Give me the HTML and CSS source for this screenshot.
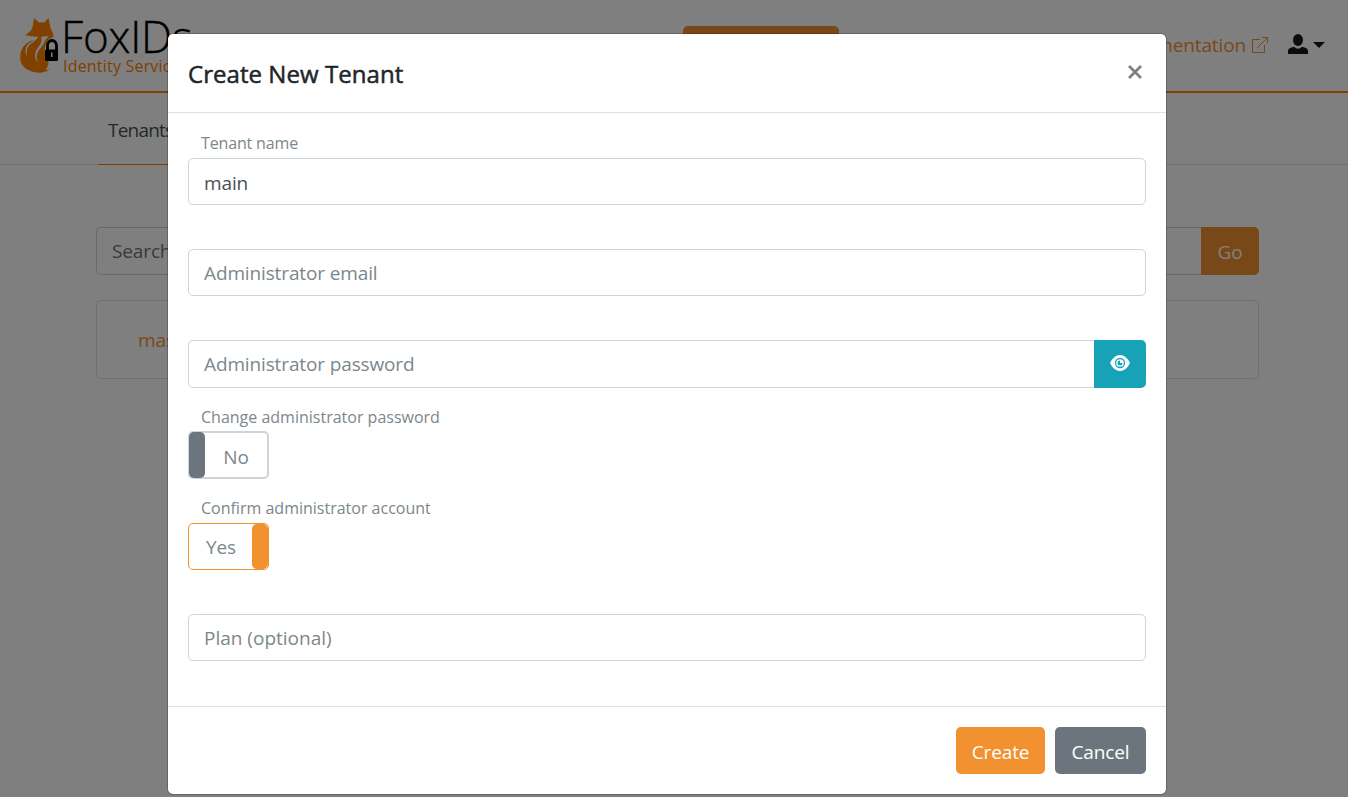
FILE: index.html
```html
<!DOCTYPE html>
<html lang="en">
<head>
<meta charset="utf-8">
<title>FoxIDs</title>
<link rel="stylesheet" href="styles.css">
</head>
<body>
<div class="page">
  <header class="navbar">
    <a class="brand">
      <svg class="fox" width="40" height="58" viewBox="0 0 40 58">
        <path fill="#ff8000" d="M14 2l5 4.500h5L28.500 2l2 10c2 4 3 6 3 9-4 1-6 3-8 8-2 6 0 10 2 13 2 4 1 8-2 12l4-.500c-5 4-14 4-20 1C0 51-1 42 1 35.500 3 29 8 26 14 23.500l3-2L5 19c5-3 6-4 7.500-8z"/>
        <path fill="#fff" d="M5 19.500q8 1.500 13 1c-1 4-7 6-10 10.500-2 3-1 6-1.500 9-2.500-6-.500-10 3-13 3-2 4-3 4-5z"/>
        <path fill="#fff" d="M21 21q4-1 8-.500c-5 3-4 7-8 11-4 5-6 9-2.500 15.500-5-4-4-11-.500-15.500 3-4 4.500-7 3-10.500z"/>
        <path fill="none" stroke="#000" stroke-width="2.800" d="M27.500 35v-5.500a4.500 5 0 0 1 9 0V35"/>
        <rect x="25" y="33.500" width="13" height="11.500" rx="1.500"/>
        <path fill="#fff" d="M31 36.500h1.500V41H31z"/>
      </svg>
      <span class="brand-text"><span class="brand-name">FoxIDs</span><span class="brand-sub">Identity Services</span></span>
    </a>
    <button class="btn new-tenant">New Tenant</button>
    <nav class="nav-right">
      <a class="docs"><span>Documentation</span>
        <svg width="16" height="16" viewBox="0 0 16 16" fill="none" stroke="#f29130" stroke-width="1"><path d="M8 2.500H.500v13h12V8M5 11L15.500.500M10 .500h5.500V6"/></svg>
      </a>
      <a class="user">
        <svg width="20" height="20" viewBox="0 0 20 20" fill="#16181b"><ellipse cx="10" cy="6" rx="5" ry="6"/><path d="M0 20v-3q0-2.500 3.500-3.500l2.500-.8q4 4 8 0l2.500.8Q20 14.500 20 17v3z"/></svg>
        <span class="caret"></span>
      </a>
    </nav>
  </header>
  <div class="tabs"><a class="tab">Tenants</a></div>
  <main class="content">
    <div class="search"><div class="search-input">Search</div><button class="btn go">Go</button></div>
    <div class="card"><a>master</a></div>
  </main>
</div>
<div class="backdrop">
  <div class="modal">
    <div class="modal-header"><h5 class="title">Create New Tenant</h5>
      <svg class="close" width="14" height="14" viewBox="0 0 14 14" stroke="#7f7f7f" stroke-width="2.700"><path d="M1 1l12 12M13 1L1 13"/></svg>
    </div>
    <div class="modal-body">
      <label class="label name-label">Tenant name</label>
      <div class="input filled">main</div>
      <div class="input email">Administrator email</div>
      <div class="group"><div class="input password">Administrator password</div>
        <button class="eye"><svg width="20" height="16" viewBox="0 0 20 16"><path fill="#fff" d="M0 8Q4 0 10 0t10 8q-4 8-10 8T0 8z"/><circle cx="10" cy="8" r="4.500" fill="none" stroke="#17a2b8" stroke-width="1.300"/><path fill="#17a2b8" d="M10 5.500V8h2.500A2.500 2.500 0 1 1 10 5.500z"/></svg></button>
      </div>
      <label class="label change-label">Change administrator password</label>
      <div class="toggle off"><span class="knob"></span><span class="toggle-text">No</span></div>
      <label class="label confirm-label">Confirm administrator account</label>
      <div class="toggle on"><span class="toggle-text">Yes</span><span class="knob"></span></div>
      <div class="input plan">Plan (optional)</div>
    </div>
    <div class="modal-footer"><button class="btn create">Create</button><button class="btn cancel">Cancel</button></div>
  </div>
</div>
</body>
</html>
```
FILE: styles.css
```css
* { box-sizing: border-box; }
body { margin: 0; height: 797px; overflow: hidden; background: #fff; color: #212529; font: 19px/30px "Open Sans", "Noto Sans", sans-serif; letter-spacing: -0.13px; }
.page { height: 797px; }
.navbar { display: flex; height: 93px; padding: 16px 23px 0 20px; border-bottom: 2px solid #ff8000; position: relative; }
.brand { display: flex; }
.fox { flex: none; }
.brand-text { display: flex; flex-direction: column; margin-left: 1px; white-space: nowrap; }
.brand-name { font-size: 44px; line-height: 42px; color: #000; font-weight: 300; letter-spacing: -0.2px; margin-top: -1px; -webkit-text-stroke: 0.4px #000; }
.brand-sub { font-size: 16px; line-height: 18px; color: #ff8000; margin-left: 2px; letter-spacing: 0.2px; }
.btn { border: 0; border-radius: 5px; color: #fff; font: inherit; letter-spacing: inherit; background: #f29130; padding: 0; }
.new-tenant { position: absolute; left: 683px; top: 26px; width: 156px; height: 47px; }
.nav-right { display: flex; margin-left: auto; gap: 20px; height: 58px; align-items: center; }
.docs { display: flex; align-items: center; gap: 6px; color: #f29130; }
.user { display: flex; align-items: center; gap: 5px; margin-top: -2px; }
.caret { border: 6px solid transparent; border-top-color: #16181b; border-bottom: 0; margin-top: 1px; }
.tabs { height: 72px; padding-left: 98px; border-bottom: 1px solid #dee2e6; display: flex; }
.tab { height: 72px; width: 90px; padding: 22px 0 0 10px; border-bottom: 1px solid #ff8000; color: #495057; letter-spacing: -0.8px; }
.content { padding: 62px 89px 0 96px; }
.search { display: flex; height: 48px; }
.search-input { flex: 1; border: 1px solid #ced4da; border-right: 0; border-radius: 5px 0 0 5px; padding: 8px 15px; color: #6c757d; }
.go { width: 58px; border-radius: 0 5px 5px 0; padding-top: 2px; }
.card { margin-top: 25px; height: 79px; border: 1px solid #dfdfdf; border-radius: 5px; padding: 24px 41px; color: #f29130; }
.backdrop { position: absolute; inset: 0; background: rgba(0,0,0,.5); padding: 33px 0 0 167px; }
.modal { width: 1000px; height: 762px; border: 1px solid rgba(0,0,0,.2); border-radius: 6px; background: #fff; background-clip: padding-box; display: flex; flex-direction: column; }
.modal-header { height: 79px; padding: 0 24px 0 20px; display: flex; justify-content: space-between; border-bottom: 1px solid #dee2e6; }
.title { margin: 25px 0 0; font-size: 24px; line-height: 30px; font-weight: 400; letter-spacing: 0.05px; -webkit-text-stroke: 0.5px #212529; }
.close { margin-top: 31px; }
.modal-body { flex: 1; padding: 18px 20px 0; }
.label { display: block; height: 27px; padding-left: 13px; font-size: 16px; line-height: 24px; color: #7c878c; letter-spacing: 0; }
.name-label { letter-spacing: -0.15px; }
.input { height: 47px; border: 1px solid #ced4da; border-radius: 5px; padding: 8px 15px 0; line-height: 30px; color: #7c878c; }
.filled { color: #495057; padding-top: 9px; }
.email { margin-top: 44px; }
.group { display: flex; margin-top: 44px; }
.password { flex: 1; height: 48px; border-right: 0; border-radius: 5px 0 0 5px; }
.eye { width: 52px; height: 48px; border: 0; padding: 0 0 2px; border-radius: 0 5px 5px 0; background: #17a2b8; display: flex; align-items: center; justify-content: center; }
.change-label { margin-top: 17px; height: 26px; }
.confirm-label { margin-top: 17px; }
.toggle { width: 81px; height: 47px; border-radius: 5px; display: flex; color: #7c878c; line-height: 30px; }
.toggle .knob { width: 16px; border-radius: 5px; }
.toggle-text { flex: 1; text-align: center; }
.off { height: 48px; border: 2px solid #ced4da; border-left-width: 1px; }
.off .knob { background: #6c757d; margin: -1px 0; }
.off .toggle-text { padding-top: 9px; }
.on { border: 1px solid #f29130; }
.on .knob { background: #f29130; }
.on .toggle-text { padding: 8px 0 0 1px; }
.plan { margin-top: 44px; letter-spacing: 0; }
.modal-footer { height: 88px; border-top: 1px solid #dee2e6; padding: 20px; display: flex; justify-content: flex-end; gap: 10px; }
.modal-footer .btn { height: 47px; padding-top: 3px; }
.create { width: 89px; }
.modal-footer .cancel { width: 91px; background: #6c757d; }
```
